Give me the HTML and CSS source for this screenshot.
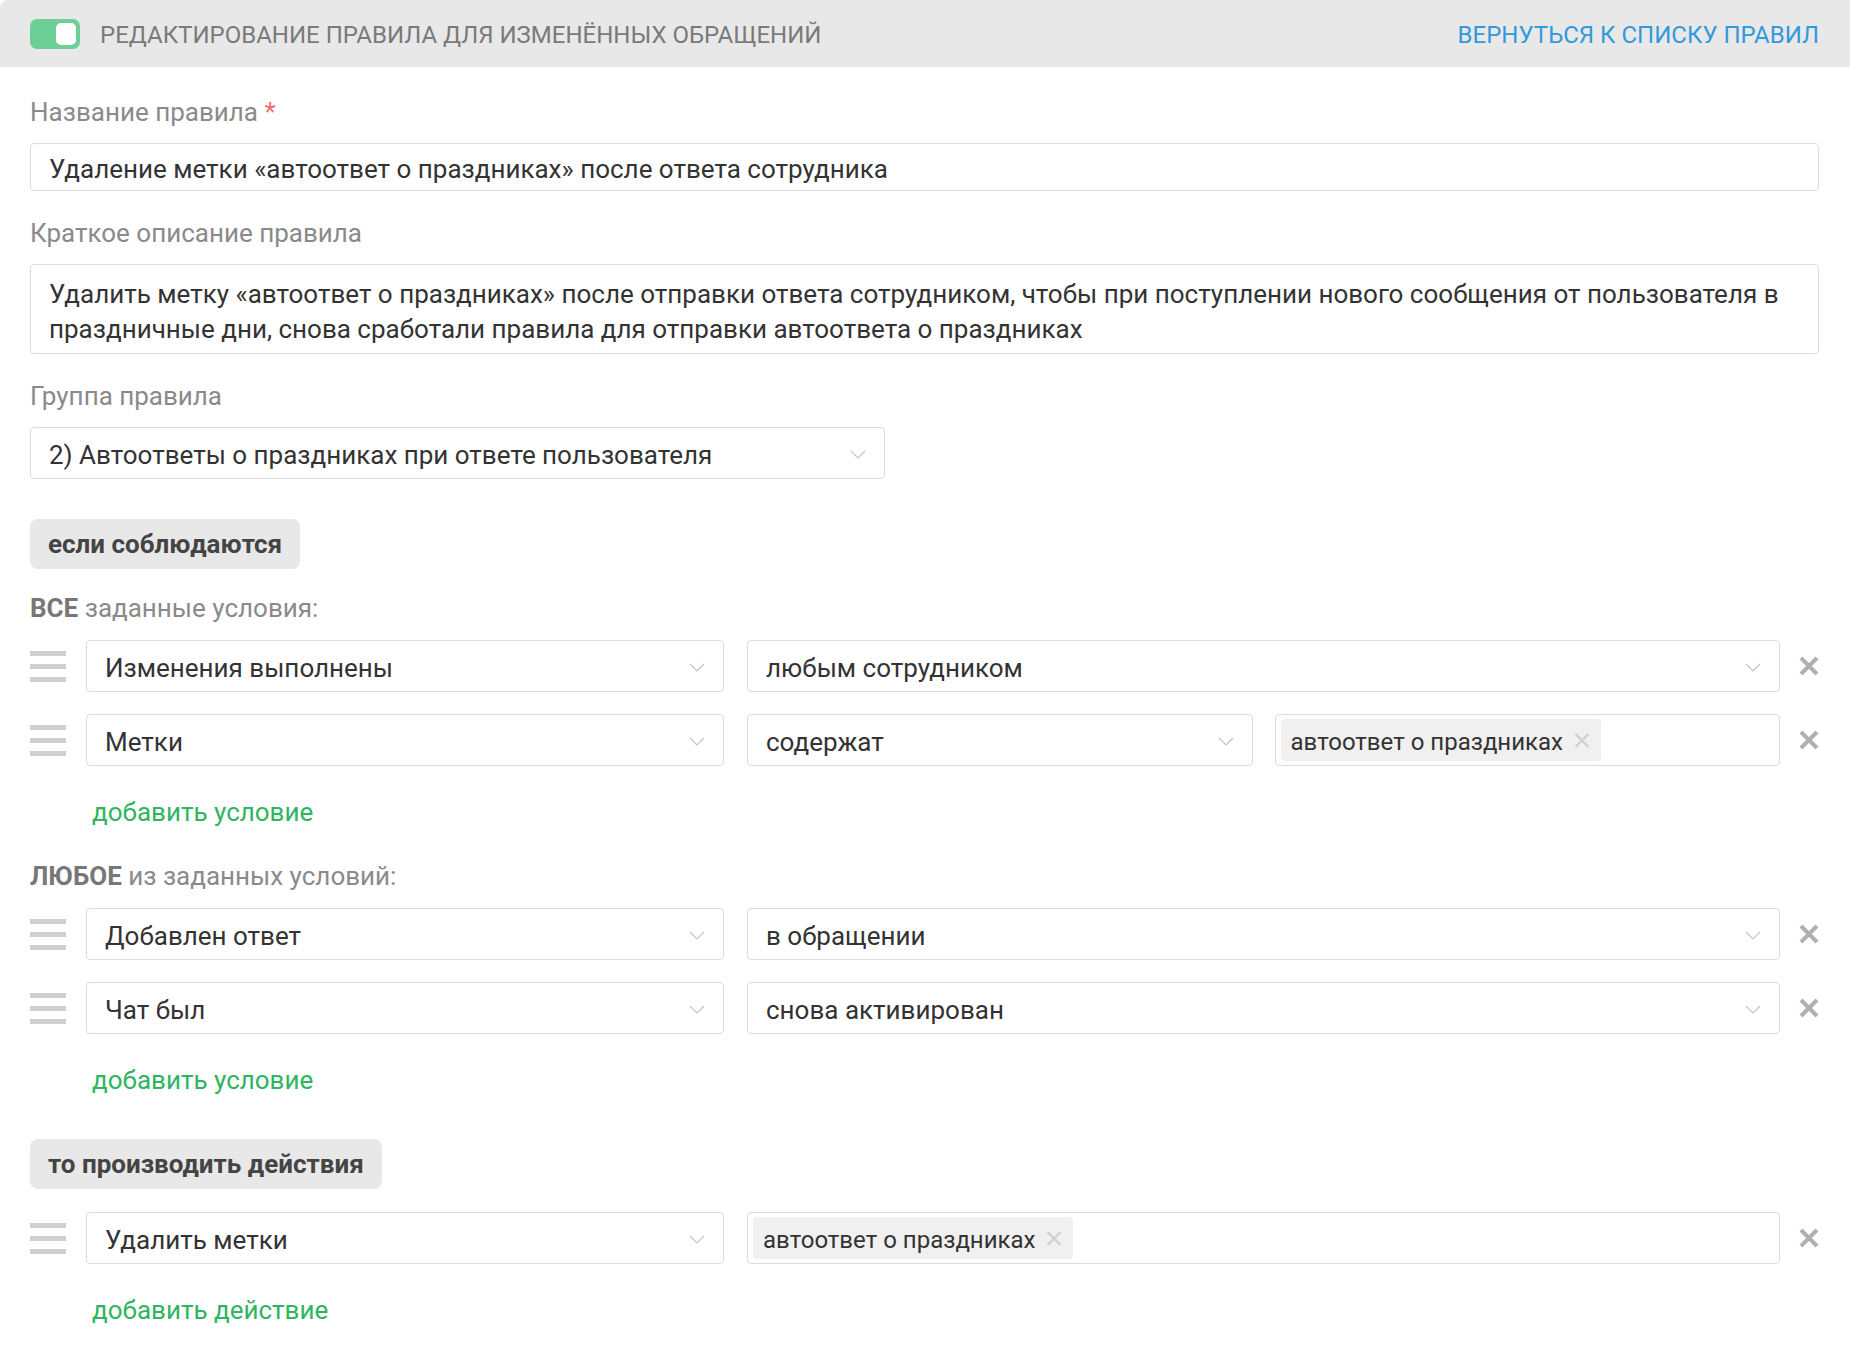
FILE: index.html
```html
<!DOCTYPE html>
<html lang="ru">
<head>
  <meta charset="UTF-8">
  <title>Редактирование правила</title>
  <link rel="stylesheet" href="styles.css">
</head>
<body>
  <div class="page">
    <div class="topbar">
      <div class="topbar-left">
        <span class="toggle"><span class="toggle-knob"></span></span>
        <span class="topbar-title">Редактирование правила для изменённых обращений</span>
      </div>
      <a class="back-link" href="#">Вернуться к списку правил</a>
    </div>

    <div class="content">
      <div class="field">
        <div class="label">Название правила <span class="req">*</span></div>
        <div class="input">Удаление метки «автоответ о праздниках» после ответа сотрудника</div>
      </div>

      <div class="field">
        <div class="label">Краткое описание правила</div>
        <div class="input textarea">Удалить метку «автоответ о праздниках» после отправки ответа сотрудником, чтобы при поступлении нового сообщения от пользователя в праздничные дни, снова сработали правила для отправки автоответа о праздниках</div>
      </div>

      <div class="field">
        <div class="label">Группа правила</div>
        <div class="input select group-select">
          <span>2) Автоответы о праздниках при ответе пользователя</span>
          <svg class="chevron" width="16" height="9" viewBox="0 0 16 9"><path d="M1 1l7 7 7-7" fill="none" stroke="#c4c4c4" stroke-width="1.2"/></svg>
        </div>
      </div>

      <div class="pill pill-if">если соблюдаются</div>

      <div class="cond-title"><b>ВСЕ</b> заданные условия:</div>
      <div class="rows">
        <div class="row">
          <div class="handle"><span></span><span></span><span></span></div>
          <div class="input select col-first">
            <span>Изменения выполнены</span>
            <svg class="chevron" width="16" height="9" viewBox="0 0 16 9"><path d="M1 1l7 7 7-7" fill="none" stroke="#c4c4c4" stroke-width="1.2"/></svg>
          </div>
          <div class="row-rest">
            <div class="input select">
              <span>любым сотрудником</span>
              <svg class="chevron" width="16" height="9" viewBox="0 0 16 9"><path d="M1 1l7 7 7-7" fill="none" stroke="#c4c4c4" stroke-width="1.2"/></svg>
            </div>
          </div>
          <svg class="remove" width="20" height="20" viewBox="0 0 20 20"><path d="M2 2l16 16M18 2L2 18" stroke="#b0b0b0" stroke-width="4"/></svg>
        </div>
        <div class="row">
          <div class="handle"><span></span><span></span><span></span></div>
          <div class="input select col-first">
            <span>Метки</span>
            <svg class="chevron" width="16" height="9" viewBox="0 0 16 9"><path d="M1 1l7 7 7-7" fill="none" stroke="#c4c4c4" stroke-width="1.2"/></svg>
          </div>
          <div class="row-rest">
            <div class="input select">
              <span>содержат</span>
              <svg class="chevron" width="16" height="9" viewBox="0 0 16 9"><path d="M1 1l7 7 7-7" fill="none" stroke="#c4c4c4" stroke-width="1.2"/></svg>
            </div>
            <div class="input tags">
              <span class="tag">автоответ о праздниках<svg class="tag-x" width="16" height="15" viewBox="0 0 16 15"><path d="M1.5 1l13 13M14.5 1l-13 13" stroke="#d0d0d0" stroke-width="2.4"/></svg></span>
            </div>
          </div>
          <svg class="remove" width="20" height="20" viewBox="0 0 20 20"><path d="M2 2l16 16M18 2L2 18" stroke="#b0b0b0" stroke-width="4"/></svg>
        </div>
      </div>
      <a class="add-link" href="#">добавить условие</a>

      <div class="cond-title"><b>ЛЮБОЕ</b> из заданных условий:</div>
      <div class="rows">
        <div class="row">
          <div class="handle"><span></span><span></span><span></span></div>
          <div class="input select col-first">
            <span>Добавлен ответ</span>
            <svg class="chevron" width="16" height="9" viewBox="0 0 16 9"><path d="M1 1l7 7 7-7" fill="none" stroke="#c4c4c4" stroke-width="1.2"/></svg>
          </div>
          <div class="row-rest">
            <div class="input select">
              <span>в обращении</span>
              <svg class="chevron" width="16" height="9" viewBox="0 0 16 9"><path d="M1 1l7 7 7-7" fill="none" stroke="#c4c4c4" stroke-width="1.2"/></svg>
            </div>
          </div>
          <svg class="remove" width="20" height="20" viewBox="0 0 20 20"><path d="M2 2l16 16M18 2L2 18" stroke="#b0b0b0" stroke-width="4"/></svg>
        </div>
        <div class="row">
          <div class="handle"><span></span><span></span><span></span></div>
          <div class="input select col-first">
            <span>Чат был</span>
            <svg class="chevron" width="16" height="9" viewBox="0 0 16 9"><path d="M1 1l7 7 7-7" fill="none" stroke="#c4c4c4" stroke-width="1.2"/></svg>
          </div>
          <div class="row-rest">
            <div class="input select">
              <span>снова активирован</span>
              <svg class="chevron" width="16" height="9" viewBox="0 0 16 9"><path d="M1 1l7 7 7-7" fill="none" stroke="#c4c4c4" stroke-width="1.2"/></svg>
            </div>
          </div>
          <svg class="remove" width="20" height="20" viewBox="0 0 20 20"><path d="M2 2l16 16M18 2L2 18" stroke="#b0b0b0" stroke-width="4"/></svg>
        </div>
      </div>
      <a class="add-link" href="#">добавить условие</a>

      <div class="pill pill-then">то производить действия</div>

      <div class="rows">
        <div class="row">
          <div class="handle"><span></span><span></span><span></span></div>
          <div class="input select col-first">
            <span>Удалить метки</span>
            <svg class="chevron" width="16" height="9" viewBox="0 0 16 9"><path d="M1 1l7 7 7-7" fill="none" stroke="#c4c4c4" stroke-width="1.2"/></svg>
          </div>
          <div class="row-rest">
            <div class="input tags">
              <span class="tag">автоответ о праздниках<svg class="tag-x" width="16" height="15" viewBox="0 0 16 15"><path d="M1.5 1l13 13M14.5 1l-13 13" stroke="#d0d0d0" stroke-width="2.4"/></svg></span>
            </div>
          </div>
          <svg class="remove" width="20" height="20" viewBox="0 0 20 20"><path d="M2 2l16 16M18 2L2 18" stroke="#b0b0b0" stroke-width="4"/></svg>
        </div>
      </div>
      <a class="add-link add-action" href="#">добавить действие</a>
    </div>
  </div>
</body>
</html>
```

FILE: styles.css
```css
body {
  margin: 0;
  font-family: Roboto, "Liberation Sans", Arial, sans-serif;
  font-size: 26px;
  color: #333;
  background: #fff;
}
a {
  text-decoration: none;
}

/* top bar */
.topbar {
  height: 67px;
  display: flex;
  align-items: center;
  justify-content: space-between;
  padding: 0 31px 0 30px;
  background: #e8e8e8;
  border-top-left-radius: 8px;
}
.topbar-left {
  display: flex;
  align-items: center;
  gap: 20px;
}
.toggle {
  width: 50px;
  height: 30px;
  border-radius: 7px;
  background: #6ccf96;
  display: flex;
  align-items: center;
  justify-content: flex-end;
  padding-right: 4px;
  box-sizing: border-box;
}
.toggle-knob {
  width: 20px;
  height: 22px;
  border-radius: 5px;
  background: #fff;
}
.topbar-title {
  text-transform: uppercase;
  color: #7a7a7a;
  font-size: 24px;
  margin-top: 2px;
}
.back-link {
  text-transform: uppercase;
  color: #3399dd;
  font-size: 24px;
  margin-top: 2px;
}

/* form */
.content {
  padding: 30px 31px 40px 30px;
}
.field {
  margin-bottom: 27px;
}
.label {
  line-height: 30px;
  color: #8a8a8a;
  margin-bottom: 16px;
}
.req {
  color: #f06a6a;
}
.input {
  box-sizing: border-box;
  height: 48px;
  border: 1px solid #dcdcdc;
  border-radius: 4px;
  padding: 3px 18px 0;
  display: flex;
  align-items: center;
  color: #333;
  background: #fff;
}
.textarea {
  display: block;
  height: auto;
  padding: 12px 18px 6px;
  line-height: 35px;
}
.select {
  height: 52px;
  justify-content: space-between;
}
.group-select {
  width: 855px;
}
.chevron {
  flex-shrink: 0;
}

/* blocks */
.pill {
  display: inline-block;
  height: 50px;
  line-height: 50px;
  padding: 0 18px;
  border-radius: 8px;
  background: #e8e8e8;
  font-weight: 700;
  color: #444;
}
.pill-if {
  margin-top: 13px;
}
.pill-then {
  margin-top: 44px;
}
.cond-title {
  margin-top: 24px;
  line-height: 30px;
  color: #8a8a8a;
}
.cond-title b {
  color: #777;
}
.rows {
  margin-top: 17px;
  display: flex;
  flex-direction: column;
  gap: 22px;
}
.pill-then + .rows {
  margin-top: 23px;
}
.row {
  display: flex;
  align-items: center;
}
.handle {
  width: 36px;
  display: flex;
  flex-direction: column;
  gap: 8px;
  margin-right: 20px;
}
.handle span {
  height: 5px;
  background: #d0d0d0;
}
.col-first {
  width: 638px;
  flex-shrink: 0;
}
.row-rest {
  flex: 1;
  display: grid;
  grid-auto-flow: column;
  grid-auto-columns: 1fr;
  gap: 22px;
  margin-left: 23px;
}
.tags {
  height: 52px;
  padding: 0 5px;
}
.tag {
  display: flex;
  align-items: center;
  gap: 11px;
  height: 42px;
  padding: 3px 11px 0 10px;
  box-sizing: border-box;
  border-radius: 4px;
  background: #f0f0f0;
  color: #333;
  font-size: 24px;
}
.tag-x {
  margin-top: -3px;
}
.remove {
  margin-left: 19px;
}
.add-link {
  display: block;
  margin: 31px 0 0 62px;
  line-height: 30px;
  color: #2fb45f;
}
.add-link + .cond-title {
  margin-top: 34px;
}
```
